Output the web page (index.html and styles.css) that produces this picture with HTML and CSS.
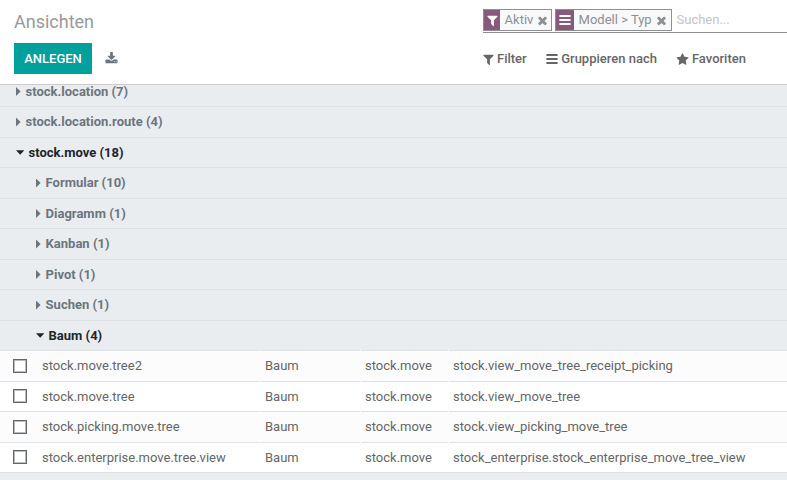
FILE: index.html
```html
<!DOCTYPE html>
<html lang="de">
<head>
<meta charset="utf-8">
<title>Ansichten</title>
<link rel="stylesheet" href="styles.css">
</head>
<body>
<svg class="defs" aria-hidden="true">
<symbol id="filter" viewBox="0 0 1792 1792"><path d="M1595 295q17 41-14 70l-493 493v742q0 42-39 59-13 5-25 5-27 0-45-19l-256-256q-19-19-19-45v-486l-493-493q-31-29-14-70 17-39 59-39h1280q42 0 59 39z"/></symbol>
<symbol id="bars" viewBox="0 0 12 12"><path d="M.4 1h11.2v2H.4zM.4 5h11.2v2H.4zM.4 9h11.2v2H.4z"/></symbol>
<symbol id="star" viewBox="0 0 1792 1792"><path d="M1728 647q0 22-26 48l-363 354 86 500q1 7 1 20 0 21-10.5 35.5t-30.5 14.5q-19 0-40-12l-449-236-449 236q-22 12-40 12-21 0-31.5-14.5t-10.5-35.5q0-6 2-20l86-500-364-354q-25-27-25-48 0-37 56-46l502-73 225-455q19-41 49-41t49 41l225 455 502 73q56 9 56 46z"/></symbol>
<symbol id="times" viewBox="0 0 1792 1792"><path d="M1490 1322q0 40-28 68l-136 136q-28 28-68 28t-68-28l-294-294-294 294q-28 28-68 28t-68-28l-136-136q-28-28-28-68t28-68l294-294-294-294q-28-28-28-68t28-68l136-136q28-28 68-28t68 28l294 294 294-294q28-28 68-28t68 28l136 136q28 28 28 68t-28 68l-294 294 294 294q28 28 28 68z"/></symbol>
<symbol id="download" viewBox="0 0 1792 1792"><path d="M1344 1344q0-26-19-45t-45-19-45 19-19 45 19 45 45 19 45-19 19-45zm256 0q0-26-19-45t-45-19-45 19-19 45 19 45 45 19 45-19 19-45zm128-224v320q0 40-28 68t-68 28h-1472q-40 0-68-28t-28-68v-320q0-40 28-68t68-28h465l135 136q58 56 136 56t136-56l136-136h464q40 0 68 28t28 68zm-325-569q17 41-14 70l-448 448q-18 19-45 19t-45-19l-448-448q-31-29-14-70 17-39 59-39h256v-448q0-26 19-45t45-19h256q26 0 45 19t19 45v448h256q42 0 59 39z"/></symbol>
</svg>
<header class="panel">
  <div class="left">
    <h1>Ansichten</h1>
    <div class="actions">
      <button class="create">ANLEGEN</button>
      <svg class="icon download"><use href="#download"/></svg>
    </div>
  </div>
  <div class="right">
    <div class="search">
      <div class="facet"><span class="tag"><svg class="icon"><use href="#filter"/></svg></span><span class="value">Aktiv</span><svg class="icon close"><use href="#times"/></svg></div>
      <div class="facet grouped"><span class="tag"><svg class="icon bars"><use href="#bars"/></svg></span><span class="value">Modell &gt; Typ</span><svg class="icon close"><use href="#times"/></svg></div>
      <span class="placeholder">Suchen...</span>
    </div>
    <nav class="menus">
      <span class="menu m-filter"><svg class="icon"><use href="#filter"/></svg>Filter</span>
      <span class="menu m-group"><svg class="icon bars"><use href="#bars"/></svg>Gruppieren nach</span>
      <span class="menu m-star"><svg class="icon"><use href="#star"/></svg>Favoriten</span>
    </nav>
  </div>
</header>
<main class="list">
  <div class="rows">
    <div class="group"><i class="caret"></i>stock.location (7)</div>
    <div class="group"><i class="caret"></i>stock.location.route (4)</div>
    <div class="group open"><i class="caret"></i>stock.move (18)</div>
    <div class="group sub"><i class="caret"></i>Formular (10)</div>
    <div class="group sub"><i class="caret"></i>Diagramm (1)</div>
    <div class="group sub"><i class="caret"></i>Kanban (1)</div>
    <div class="group sub"><i class="caret"></i>Pivot (1)</div>
    <div class="group sub"><i class="caret"></i>Suchen (1)</div>
    <div class="group sub open"><i class="caret"></i>Baum (4)</div>
    <div class="record odd"><div class="cell name"><span class="check"></span>stock.move.tree2</div><div class="cell">Baum</div><div class="cell">stock.move</div><div class="cell">stock.view_move_tree_receipt_picking</div></div>
    <div class="record"><div class="cell name"><span class="check"></span>stock.move.tree</div><div class="cell">Baum</div><div class="cell">stock.move</div><div class="cell">stock.view_move_tree</div></div>
    <div class="record odd"><div class="cell name"><span class="check"></span>stock.picking.move.tree</div><div class="cell">Baum</div><div class="cell">stock.move</div><div class="cell">stock.view_picking_move_tree</div></div>
    <div class="record"><div class="cell name"><span class="check"></span>stock.enterprise.move.tree.view</div><div class="cell">Baum</div><div class="cell">stock.move</div><div class="cell">stock_enterprise.stock_enterprise_move_tree_view</div></div>
    <div class="group"></div>
  </div>
</main>
</body>
</html>
```

FILE: styles.css
```css
* { box-sizing: border-box; }
body {
  margin: 0;
  height: 480px;
  overflow: hidden;
  display: flex;
  flex-direction: column;
  font: 13px/20px Roboto, sans-serif;
  color: #666;
  background: #fff;
}
.defs { display: none; }
.icon { width: 13px; height: 13px; fill: currentColor; flex: none; }
.icon.bars { width: 12px; height: 12px; }

.panel {
  height: 85px;
  flex: none;
  display: flex;
  border-bottom: 1px solid #ccc;
}
.left { width: 483px; padding: 8px 0 0 14px; }
h1 { margin: 0; font-size: 18px; font-weight: 400; line-height: 27px; color: #999; }
.actions { display: flex; align-items: center; margin-top: 8px; }
.create {
  width: 78px;
  height: 31px;
  padding: 0;
  border: 0;
  background: #00a09d;
  color: #fff;
  font: 500 13px/31px Roboto, sans-serif;
}
.download { margin-left: 13px; color: #6c757d; }

.right { flex: 1; padding-top: 9px; }
.search { display: flex; height: 24px; border-bottom: 1px solid #8f8f8f; }
.facet {
  display: flex;
  align-items: center;
  width: 69px;
  height: 22px;
  border: 1px solid #8f8f8f;
  background: #f8f9fa;
  color: #8f8f8f;
}
.facet.grouped { width: 117px; margin-left: 3px; }
.tag {
  width: 16px;
  height: 20px;
  display: flex;
  align-items: center;
  justify-content: center;
  background: #875a7b;
  color: #fff;
}
.tag .icon { flex: none; }
.grouped .tag { width: 18px; }
.value { margin-left: 4.6px; white-space: nowrap; }
.close { margin: 1px 0 0 2.4px; }
.grouped .close { margin-left: 3.4px; }
.placeholder { margin-left: 4.5px; line-height: 22px; color: #c4c4c4; }

.menus { display: flex; margin-top: 16px; font-weight: 500; }
.menu { display: flex; align-items: center; white-space: nowrap; }
.m-filter { margin-left: -1px; gap: 2px; }
.m-group { margin-left: 19.5px; gap: 3px; }
.m-star { margin-left: 19.5px; gap: 2.5px; }

.list { flex: 1; overflow: hidden; background: #e9edf0; }
.rows { margin-top: -9.2px; }
.group {
  display: flex;
  align-items: center;
  height: 30.5px;
  padding-left: 16px;
  border-top: 1px solid #dee2e6;
  background: #e9edf0;
  color: #6c757d;
  font-weight: 700;
}
.group.sub { padding-left: 36px; }
.group.open { color: #212529; }
.caret {
  width: 4.6px;
  height: 9px;
  margin-right: 5px;
  background: currentColor;
  clip-path: polygon(0 0, 100% 50%, 0 100%);
}
.open .caret {
  width: 8.4px;
  height: 4.6px;
  margin-right: 4.2px;
  clip-path: polygon(0 0, 100% 0, 50% 100%);
}
.record {
  display: grid;
  grid-template-columns: 260px 99px 87px 1fr;
  column-gap: 1px;
  height: 30.5px;
  background: #fff;
}
.record.odd { background: #fcfcfc; }
.cell {
  display: flex;
  align-items: center;
  padding-left: 4px;
  border-top: 1px solid #dee2e6;
  white-space: nowrap;
}
.cell.name { padding-left: 13px; }
.check {
  width: 14px;
  height: 14px;
  margin: -1px 15px 0 0;
  border: 1px solid #666;
  box-shadow: inset 0 0 0 1px #b4bcc4;
  background: #fff;
}
```
